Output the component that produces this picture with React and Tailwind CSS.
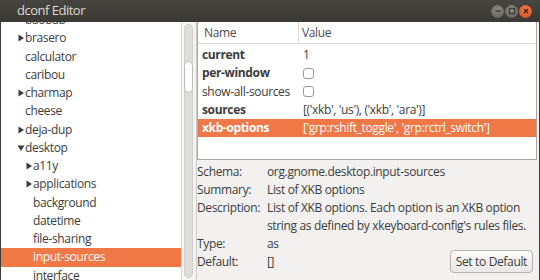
import React from "react";

const tree = [
  { label: "baobab", depth: 0, arrow: null },
  { label: "brasero", depth: 0, arrow: "right" },
  { label: "calculator", depth: 0, arrow: null },
  { label: "caribou", depth: 0, arrow: null },
  { label: "charmap", depth: 0, arrow: "right" },
  { label: "cheese", depth: 0, arrow: null },
  { label: "deja-dup", depth: 0, arrow: "right" },
  { label: "desktop", depth: 0, arrow: "down" },
  { label: "a11y", depth: 1, arrow: "right" },
  { label: "applications", depth: 1, arrow: "right" },
  { label: "background", depth: 1, arrow: null },
  { label: "datetime", depth: 1, arrow: null },
  { label: "file-sharing", depth: 1, arrow: null },
  { label: "input-sources", depth: 1, arrow: null, selected: true },
  { label: "interface", depth: 1, arrow: null },
];

const keys = [
  { name: "current", value: "1", bold: true },
  { name: "per-window", check: true, bold: true },
  { name: "show-all-sources", check: true },
  { name: "sources", value: "[('xkb', 'us'), ('xkb', 'ara')]", bold: true },
  {
    name: "xkb-options",
    value: "['grp:rshift_toggle', 'grp:rctrl_switch']",
    bold: true,
    selected: true,
  },
];

const info = [
  ["Schema:", "org.gnome.desktop.input-sources"],
  ["Summary:", "List of XKB options"],
  [
    "Description:",
    "List of XKB options. Each option is an XKB option string as defined by xkeyboard-config's rules files.",
  ],
  ["Type:", "as"],
  ["Default:", "[]"],
];

const Arrow = ({ dir }) => (
  <svg width="8" height="8" viewBox="0 0 8 8" className="shrink-0">
    {dir === "right" ? (
      <path d="M1.5 0.5 L7 4 L1.5 7.5 Z" fill="#3c3c3c" />
    ) : (
      <path d="M0.5 1.5 L7.5 1.5 L4 7 Z" fill="#3c3c3c" />
    )}
  </svg>
);

const WinButton = ({ kind }) => {
  const close = kind === "close";
  return (
    <div
      className={`w-[13px] h-[13px] rounded-full flex items-center justify-center ${
        close
          ? "bg-[radial-gradient(circle_at_50%_35%,#f57a4c,#d9481c)]"
          : "bg-[radial-gradient(circle_at_50%_35%,#8c8a85,#5e5c57)]"
      }`}
    >
      <svg width="8" height="8" viewBox="0 0 8 8">
        {kind === "min" && (
          <path d="M1.5 4 H6.5" stroke="#3a3935" strokeWidth="1.4" />
        )}
        {kind === "max" && (
          <rect x="1.5" y="1.5" width="5" height="5" fill="none" stroke="#3a3935" strokeWidth="1.2" />
        )}
        {close && (
          <path d="M2 2 L6 6 M6 2 L2 6" stroke="#3a2218" strokeWidth="1.4" />
        )}
      </svg>
    </div>
  );
};

const App = () => {
  return (
    <div
      className="w-[540px] h-[280px] overflow-hidden bg-[#3c3b37] text-[12px] tracking-[-0.35px] text-[#3c3c3c] flex flex-col"
      style={{ fontFamily: "'Open Sans', 'DejaVu Sans', sans-serif" }}
    >
      {/* title bar */}
      <div className="h-[22px] shrink-0 flex items-center justify-between pl-[17px] pr-[8px] bg-gradient-to-b from-[#46453f] to-[#3a3935]">
        <span className="text-[13px] tracking-[-0.5px] text-[#dfdbd2]">dconf Editor</span>
        <div className="flex items-center gap-[1px]">
          <WinButton kind="min" />
          <WinButton kind="max" />
          <WinButton kind="close" />
        </div>
      </div>

      <div className="flex-1 flex bg-[#f2f1f0] border-x border-[#3c3b37] min-h-0">
        {/* left tree */}
        <div className="w-[180px] bg-white overflow-hidden">
          <div className="mt-[-11px]">
            {tree.map((t) => (
              <div
                key={t.label}
                className={`h-[18.25px] flex items-center ${
                  t.selected ? "bg-[#f07746] text-white" : ""
                }`}
                style={{ paddingLeft: 16 + t.depth * 8 }}
              >
                <span className="w-[8px] flex items-center">
                  {t.arrow && <Arrow dir={t.arrow} />}
                </span>
                <span>{t.label}</span>
              </div>
            ))}
          </div>
        </div>

        {/* scrollbar */}
        <div className="w-[13px] bg-[#f6f6f5] border-l border-[#dcdbd8] flex justify-center py-[2px]">
          <div className="w-[9px] h-full rounded-full bg-[#dedddb] border border-[#cfcecb] pt-[36px]">
            <div className="w-[9px] ml-[-1px] h-[32px] rounded-full bg-white border border-[#bdbcb9]" />
          </div>
        </div>

        {/* pane handle */}
        <div className="w-[3px] border-r border-[#cfcdca]" />

        {/* right pane */}
        <div className="flex-1 flex flex-col pr-[2px] pb-[2px] min-w-0">
          <div className="h-[138px] shrink-0 bg-white border border-[#a8a7a4] border-t-0 flex flex-col">
            <div className="h-[22px] shrink-0 flex border-b border-[#dcdbd8] text-[#4c4c4c]">
              <div className="w-[101px] pl-[6px] flex items-center border-r border-[#dcdbd8]">
                Name
              </div>
              <div className="pl-[3px] flex items-center">Value</div>
            </div>
            <div className="pt-[2px]">
              {keys.map((k) => (
                <div
                  key={k.name}
                  className={`h-[18.25px] flex items-center ${
                    k.selected ? "bg-[#f07746] text-white" : ""
                  }`}
                >
                  <div className={`w-[101px] pl-[4px] ${k.bold ? "font-bold" : ""}`}>
                    {k.name}
                  </div>
                  <div className="pl-[4px] flex items-center">
                    {k.check ? (
                      <span className="w-[11px] h-[11px] rounded-[3px] border border-[#9a9996] bg-white" />
                    ) : (
                      k.value
                    )}
                  </div>
                </div>
              ))}
            </div>
          </div>

          <div className="flex-1 flex flex-col pt-[3px] relative">
            {info.map(([label, value]) => (
              <div key={label} className="flex leading-[18px]">
                <div className="w-[70px] shrink-0">{label}</div>
                <div className="w-[266px]">{value}</div>
              </div>
            ))}
            <button className="absolute right-[4px] bottom-[5px] h-[23px] px-[5px] rounded-[4px] border border-[#b4b3b0] bg-gradient-to-b from-[#fbfbfa] to-[#e9e8e6] text-[#3c3c3c]">
              Set to Default
            </button>
          </div>
        </div>
      </div>
    </div>
  );
};

export default App;
